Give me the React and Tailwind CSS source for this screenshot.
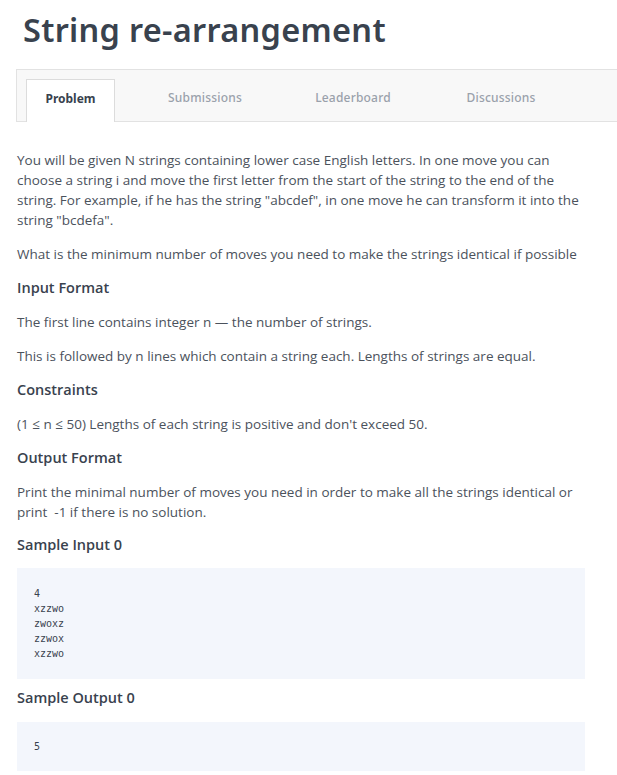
const tabs = ['Problem', 'Submissions', 'Leaderboard', 'Discussions'];

function Heading({ children }) {
  return (
    <h3 className="text-[14.5px] font-semibold text-[#39424e] leading-[20px] mb-[14px]">
      {children}
    </h3>
  );
}

function Para({ children }) {
  return <p className="mb-[14px]">{children}</p>;
}

function CodeBlock({ lines, short }) {
  return (
    <pre
      className={`bg-[#f3f6fc] w-[568px] px-[17px] text-[10px] leading-[15px] text-[#39424e] font-['DejaVu_Sans_Mono',monospace] mb-[9px] ${
        short ? 'py-[17px]' : 'py-[18px]'
      }`}
    >
      {lines.join('\n')}
    </pre>
  );
}

export default function App() {
  return (
    <div className="bg-white min-h-[775px] overflow-hidden font-['Open_Sans',sans-serif]">
      <h1 className="pl-[23px] pt-[8px] text-[32.5px] leading-[44px] font-semibold text-[#39424e] tracking-[0.3px] font-['Noto_Sans',sans-serif]">
        String re-arrangement
      </h1>

      <div className="ml-[16px] mt-[17px] h-[53px] bg-[#f8f8f8] border border-r-0 border-[#e2e2e2] flex items-end pl-[9px]">
        {tabs.map((t, i) =>
          i === 0 ? (
            <div
              key={t}
              className="w-[89px] h-[43px] mr-[16px] bg-white border border-b-0 border-[#dcdcdc] flex items-center justify-center pb-[4px] text-[12px] font-bold text-[#39424e] -mb-px font-['Noto_Sans',sans-serif]"
            >
              {t}
            </div>
          ) : (
            <div
              key={t}
              className="w-[148px] h-[43px] flex items-center justify-center pb-[4px] text-[12px] font-medium tracking-[0.2px] text-[#9aa1ab] font-['Noto_Sans',sans-serif]"
            >
              {t}
            </div>
          )
        )}
      </div>

      <div className="pl-[17px] pt-[28px] pr-[32px] text-[13.5px] leading-[20px] text-[#4b525c]">
        <Para>
          You will be given N strings containing lower case English letters. In one move you can
          choose a string i and move the first letter from the start of the string to the end of the
          string. For example, if he has the string "abcdef", in one move he can transform it into the
          string "bcdefa".
        </Para>
        <Para>What is the minimum number of moves you need to make the strings identical if possible</Para>
        <Heading>Input Format</Heading>
        <Para>The first line contains integer n — the number of strings.</Para>
        <Para>This is followed by n lines which contain a string each. Lengths of strings are equal.</Para>
        <Heading>Constraints</Heading>
        <Para>(1 ≤ n ≤ 50) Lengths of each string is positive and don't exceed 50.</Para>
        <Heading>Output Format</Heading>
        <Para>
          Print the minimal number of moves you need in order to make all the strings identical or
          print &nbsp;-1 if there is no solution.
        </Para>
        <div className="mt-[-1px]">
          <Heading>Sample Input 0</Heading>
        </div>
        <div className="mt-[-1px]">
          <CodeBlock lines={['4', 'xzzwo', 'zwoxz', 'zzwox', 'xzzwo']} />
        </div>
        <Heading>Sample Output 0</Heading>
        <CodeBlock lines={['5']} short />
      </div>
    </div>
  );
}
